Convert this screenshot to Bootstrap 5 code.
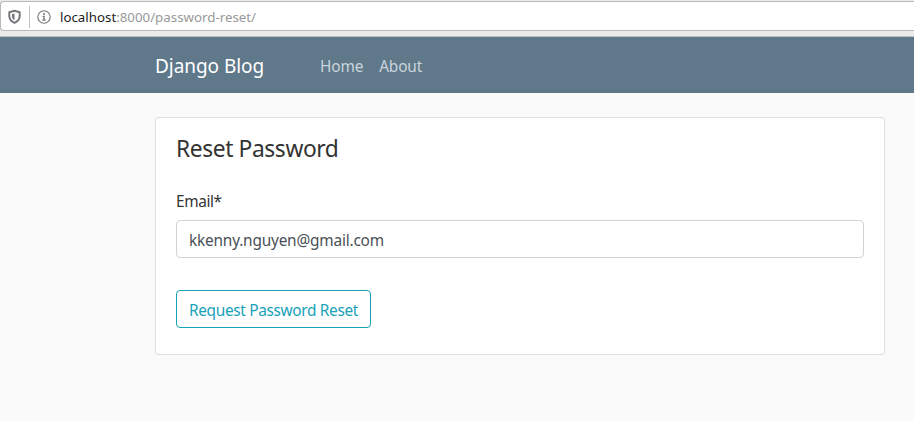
<!DOCTYPE html>
<html lang="en">
<head>
<meta charset="utf-8">
<meta name="viewport" content="width=device-width, initial-scale=1">
<title>Django Blog</title>
<link rel="stylesheet" href="https://cdn.jsdelivr.net/npm/bootstrap@5.3.0/dist/css/bootstrap.min.css">
<style>
body{background:#fafafa;color:#333;font-family:"Noto Sans","Open Sans",sans-serif;font-size:15.4px;line-height:24px;min-height:422px;overflow:hidden}
.browser-bar{height:37px;background:#ebebeb;border-bottom:1px solid #bcc1c3;padding-top:1px}
.address{height:30px;background:#fff;border:1px solid #b8b8b8;border-right:0;border-radius:4px 0 0 4px;font:13.3px/20px "Noto Sans",sans-serif;color:#999;padding:1px 0 0 6px}
.address .host{color:#222}
.address .rule{width:1px;height:22px;background:#c2c2c2;margin:0 7px 0 7px}
.address .url{margin-left:9px}
.site-nav{height:56px;background:#5f788a;padding:0 0 0 155px}
.site-nav .navbar-brand{font-size:19px;line-height:30px;letter-spacing:-.05px;color:#fff;width:149px;margin:0;padding:2px 0 0}
.site-nav .nav-link{color:#cbd5db;padding:10px 8px 6px;letter-spacing:-.15px}
.panel{width:730px;height:238px;margin:24px 0 0 155px;border:1px solid #ddd;border-radius:3px;padding:15px 20px}
.panel h1{font-size:22.8px;line-height:29px;margin:0;padding-top:1px;font-weight:400;letter-spacing:-.4px}
.panel .form-label{margin:27px 0 6px;line-height:24px;font-size:15.4px;letter-spacing:-.4px}
.panel .form-control{height:38px;border-color:#ced4da;border-radius:4px;font-size:15.4px;letter-spacing:-.2px;color:#495057;padding:8px 12px 6px}
.panel .btn{height:38px;border-radius:4px;font-size:15.4px;letter-spacing:-.33px;line-height:24px;margin-top:32px;padding:8px 0 4px 12px;width:195px;text-align:left;white-space:nowrap;color:#17a2b8;border-color:#17a2b8}
</style>
</head>
<body>
<header class="browser-bar">
  <div class="address d-flex align-items-center">
    <svg width="15" height="16" viewBox="0 0 15 16"><path d="M7.5 1.8 2.3 3.2v3.9c0 3.1 1.8 5.3 5.2 6.8 3.4-1.5 5.2-3.7 5.2-6.8V3.2z" fill="none" stroke="#77777b" stroke-width="2" stroke-linejoin="round"/><path d="M7.5 4.4 5 5v2.5c0 1.6.9 2.9 2.5 3.8z" fill="#77777b"/></svg>
    <span class="rule"></span>
    <svg width="14" height="14" viewBox="0 0 14 14"><circle cx="7" cy="7" r="6.2" fill="none" stroke="#77777b" stroke-width="1.1"/><circle cx="7" cy="3.9" r="1" fill="#77777b"/><path d="M5.5 6.4H7V10M5.3 10.1h3.4" fill="none" stroke="#77777b" stroke-width="1.4"/></svg>
    <span class="url"><span class="host">localhost</span>:8000/password-reset/</span>
  </div>
</header>
<nav class="navbar navbar-expand site-nav justify-content-start">
  <a class="navbar-brand" href="#">Django Blog</a>
  <div class="navbar-nav ps-2">
    <a class="nav-link" href="#">Home</a>
    <a class="nav-link" href="#">About</a>
  </div>
</nav>
<main class="card panel">
  <form>
    <h1>Reset Password</h1>
    <label class="form-label d-block" for="email">Email*</label>
    <input class="form-control" id="email" type="email" value="kkenny.nguyen@gmail.com">
    <button class="btn btn-outline-info" type="button">Request Password Reset</button>
  </form>
</main>
<script src="https://cdn.jsdelivr.net/npm/bootstrap@5.3.0/dist/js/bootstrap.bundle.min.js"></script>
</body>
</html>
